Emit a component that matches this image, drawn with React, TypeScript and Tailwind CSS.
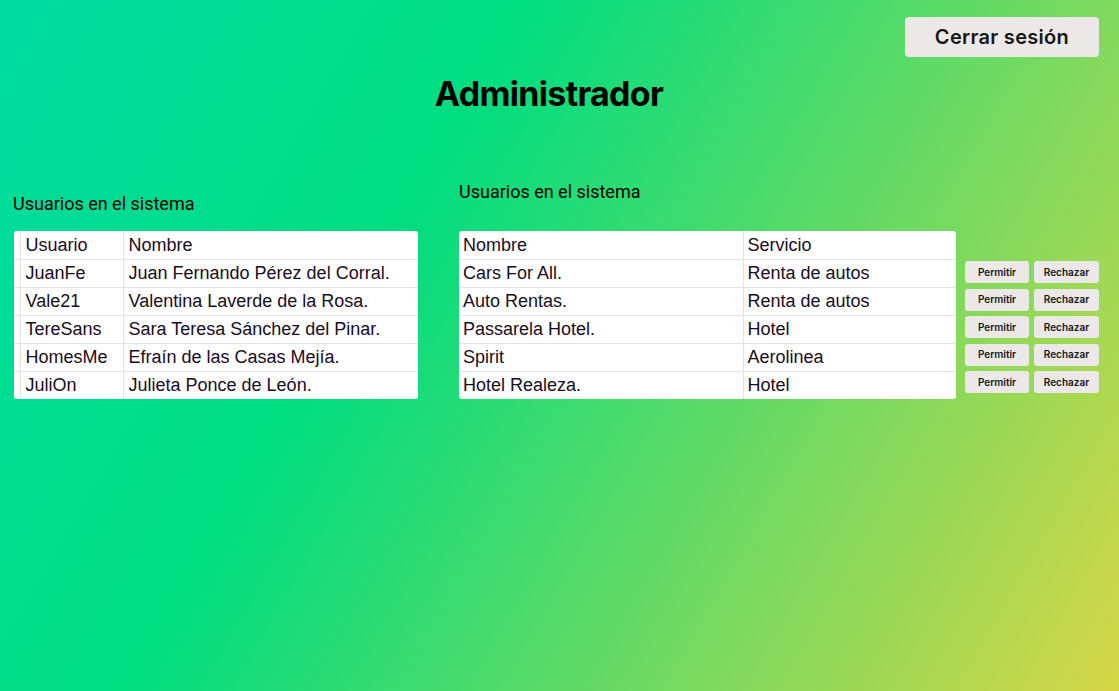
import { useState } from "react";

const usuarios = [
  { usuario: "JuanFe", nombre: "Juan Fernando Pérez del Corral." },
  { usuario: "Vale21", nombre: "Valentina Laverde de la Rosa." },
  { usuario: "TereSans", nombre: "Sara Teresa Sánchez del Pinar." },
  { usuario: "HomesMe", nombre: "Efraín de las Casas Mejía." },
  { usuario: "JuliOn", nombre: "Julieta Ponce de León." },
];

const proveedores = [
  { nombre: "Cars For All.", servicio: "Renta de autos" },
  { nombre: "Auto Rentas.", servicio: "Renta de autos" },
  { nombre: "Passarela Hotel.", servicio: "Hotel" },
  { nombre: "Spirit", servicio: "Aerolinea" },
  { nombre: "Hotel Realeza.", servicio: "Hotel" },
];

const cell =
  "h-[28px] border-b border-[#e2e2e2] text-left font-normal align-middle leading-[20px] whitespace-nowrap";

function Administrador() {
  const [estado, setEstado] = useState<Record<number, string>>({});

  return (
    <div className="min-h-screen w-full bg-[linear-gradient(120deg,#00dba2_0%,#00dd80_35%,#d6d646_100%)] text-black">
      <div className="flex justify-end pt-[17px] pr-[20px]">
        <button className="w-[194px] h-[40px] rounded-[4px] bg-[#ece8e8] text-[20px] font-semibold text-[#161616] font-['Inter',sans-serif] tracking-[0.3px]">
          Cerrar sesión
        </button>
      </div>
      <h1 className="mt-[15px] pr-[21px] text-center text-[34px] leading-[44px] font-bold tracking-[-0.7px] font-['Inter',sans-serif]">
        Administrador
      </h1>

      <div className="flex items-start mt-[65px] font-['Liberation_Sans',Arial,sans-serif] text-[18px] text-[#1a0d22]">
        <div className="ml-[13px] w-[405px] pt-[12px]">
          <p className="text-[18px] leading-[22px] text-black font-['Roboto',sans-serif]">
            Usuarios en el sistema
          </p>
          <table className="table-fixed mt-[16px] ml-[1px] w-[404px] bg-white rounded-[3px] border-collapse overflow-hidden">
            <thead>
              <tr>
                <th className={cell + " w-[6px] border-r"}></th>
                <th className={cell + " w-[103px] px-[5px] border-r"}>Usuario</th>
                <th className={cell + " px-[5px]"}>Nombre</th>
              </tr>
            </thead>
            <tbody>
              {usuarios.map((u, i) => (
                <tr key={u.usuario}>
                  <td className={cell + " border-r" + (i === usuarios.length - 1 ? " border-b-0" : "")}></td>
                  <td className={cell + " px-[5px] border-r" + (i === usuarios.length - 1 ? " border-b-0" : "")}>{u.usuario}</td>
                  <td className={cell + " px-[5px]" + (i === usuarios.length - 1 ? " border-b-0" : "")}>{u.nombre}</td>
                </tr>
              ))}
            </tbody>
          </table>
        </div>

        <div className="ml-[41px]">
          <p className="text-[18px] leading-[22px] text-black font-['Roboto',sans-serif]">
            Usuarios en el sistema
          </p>
          <div className="flex items-start mt-[28px]">
            <table className="table-fixed w-[497px] bg-white rounded-[3px] border-collapse overflow-hidden">
              <thead>
                <tr>
                  <th className={cell + " w-[284px] px-[4px] border-r"}>Nombre</th>
                  <th className={cell + " px-[4px]"}>Servicio</th>
                </tr>
              </thead>
              <tbody>
                {proveedores.map((p, i) => (
                  <tr key={p.nombre}>
                    <td className={cell + " px-[4px] border-r" + (i === proveedores.length - 1 ? " border-b-0" : "")}>{p.nombre}</td>
                    <td className={cell + " px-[4px]" + (i === proveedores.length - 1 ? " border-b-0" : "")}>{p.servicio}</td>
                  </tr>
                ))}
              </tbody>
            </table>
            <div className="ml-[9px] pt-[30px] flex flex-col gap-[5.5px] font-['Inter',sans-serif]">
              {proveedores.map((p, i) => (
                <div key={p.nombre} className="flex gap-[5px]">
                  <button
                    onClick={() => setEstado({ ...estado, [i]: "permitido" })}
                    className="w-[64px] h-[22px] rounded-[3px] bg-[#ece8e8] text-[10px] font-semibold text-[#161616]"
                  >
                    Permitir
                  </button>
                  <button
                    onClick={() => setEstado({ ...estado, [i]: "rechazado" })}
                    className="w-[65px] h-[22px] rounded-[3px] bg-[#ece8e8] text-[10px] font-semibold text-[#161616]"
                  >
                    Rechazar
                  </button>
                </div>
              ))}
            </div>
          </div>
        </div>
      </div>
    </div>
  );
}

export default Administrador;
